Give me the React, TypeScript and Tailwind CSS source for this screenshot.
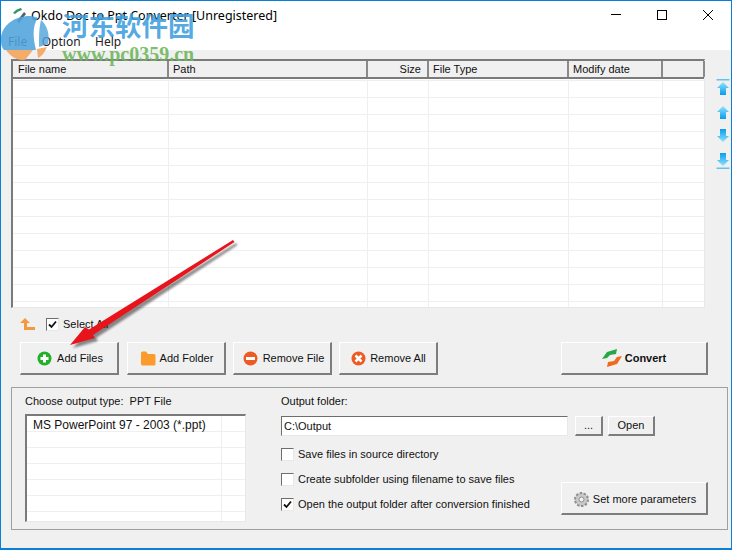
import React from 'react';

const columns = [
  { label: 'File name', width: 156, pad: 'pl-[5px]' },
  { label: 'Path', width: 199, pad: 'pl-[4px]' },
  { label: 'Size', width: 61, pad: 'pr-[6px] justify-end' },
  { label: 'File Type', width: 140, pad: 'pl-[4px]' },
  { label: 'Modify date', width: 94, pad: 'pl-[4px]' },
  { label: '', width: 42, pad: '' },
];

function ArrowIcon({ dir, bar }: { dir: 'up' | 'down'; bar?: boolean }) {
  return (
    <svg width="14" height="18" viewBox="0 0 14 18" className={dir === 'down' ? 'rotate-180' : ''}>
      <defs>
        <linearGradient id="arr-up" x1="0" y1="0" x2="0" y2="1">
          <stop offset="0" stopColor="#8fe4fa" />
          <stop offset="1" stopColor="#0b9bf0" />
        </linearGradient>
      </defs>
      {bar && <rect x="0.5" y="0" width="13" height="1.5" fill="#62c4ee" />}
      <path d="M7 3 L13 9 H10 V16 H4 V9 H1 Z" fill="url(#arr-up)" />
    </svg>
  );
}

function WinButton({ className, children }: { className: string; children: React.ReactNode }) {
  return (
    <div
      className={`flex items-center justify-center bg-[#f0f0f0] border border-t-white border-l-white border-r-2 border-b-2 border-r-[#7d7d7d] border-b-[#7d7d7d] ${className}`}
    >
      {children}
    </div>
  );
}

function Check({ checked, label }: { checked?: boolean; label: string }) {
  return (
    <div className="flex items-center gap-[4px] h-[13px]">
      <div className="w-[13px] h-[13px] bg-white border border-t-[#6d6d6d] border-l-[#6d6d6d] border-r-[#e8e8e8] border-b-[#e8e8e8] flex items-center justify-center">
        {checked && (
          <svg width="9" height="9" viewBox="0 0 9 9">
            <path d="M1 4.5 L3.5 7 L8 1.5" fill="none" stroke="#111" strokeWidth="1.8" />
          </svg>
        )}
      </div>
      <span>{label}</span>
    </div>
  );
}

function Grid({ cols, rows, rowH }: { cols: number[]; rows: number; rowH: number }) {
  return (
    <div className="relative flex-1 overflow-hidden mt-px border-t border-[#efefef]">
      {Array.from({ length: rows }).map((_, i) => (
        <div key={i} className="flex border-b border-[#efefef]" style={{ height: rowH }}>
          {cols.map((w, j) => (
            <div key={j} className="border-r border-[#efefef] shrink-0" style={{ width: w }} />
          ))}
        </div>
      ))}
    </div>
  );
}

function App() {
  return (
    <div className="relative w-[732px] h-[550px] overflow-hidden bg-white border-x border-t border-b-2 border-[#0a7fd8] font-['Liberation_Sans',sans-serif] text-[11px] text-[#111]">
      {/* title bar */}
      <div className="flex items-center h-[25px] bg-white">
        <svg width="16" height="16" viewBox="0 0 16 16" className="ml-[9px] mt-[4px]">
          <path d="M7 13 L14 4 L16 6 L9 15 Z" fill="#55606a" />
          <path d="M3 5 Q6 1 11 0 L12 2 Q8 3 5 6 Z" fill="#2a9a60" />
        </svg>
        <span className="ml-[5px] mt-[6px] font-['Noto_Sans',sans-serif] text-[12.5px] text-black">
          Okdo Doc to Ppt Converter [Unregistered]
        </span>
        <div className="ml-auto flex items-center mt-[2px]">
          <div className="w-[46px] flex justify-center">
            <div className="w-[10px] h-px bg-black" />
          </div>
          <div className="w-[46px] flex justify-center">
            <div className="w-[10px] h-[10px] border border-black" />
          </div>
          <div className="w-[46px] flex justify-center">
            <svg width="10" height="10" viewBox="0 0 10 10">
              <path d="M0 0 L10 10 M10 0 L0 10" stroke="#000" strokeWidth="1" />
            </svg>
          </div>
        </div>
      </div>

      {/* menu */}
      <div className="flex h-[24px] items-center pl-[7px] pt-[7px] gap-[14.5px] bg-white font-['Noto_Sans',sans-serif] text-[12px] text-[#222]">
        <span>File</span>
        <span>Option</span>
        <span>Help</span>
      </div>

      <div className="bg-[#f0f0f0] h-[498px] pt-[9px] pl-[10px]">
        <div className="flex">
          {/* file table */}
          <div className="w-[694px] h-[249px] flex flex-col bg-white border border-t-[#7a7a7a] border-l-[#7a7a7a] border-r-[#e8e8e8] border-b-[#e8e8e8] border-t-2 border-l-2">
            <div className="flex h-[18px] bg-[#f0f0f0] border-b-2 border-[#7a7a7a] shrink-0">
              {columns.map((c, i) => (
                <div
                  key={i}
                  style={{ width: c.width }}
                  className={`shrink-0 flex items-center border-r-2 border-[#8a8a8a] ${c.pad} ${i === 5 ? 'border-r-0' : ''}`}
                >
                  {c.label}
                </div>
              ))}
            </div>
            <Grid cols={columns.map((c) => c.width)} rows={14} rowH={17} />
          </div>

          {/* move buttons */}
          <div className="flex flex-col items-center ml-[11px] mt-[20px] gap-[6px]">
            <ArrowIcon dir="up" bar />
            <ArrowIcon dir="up" />
            <ArrowIcon dir="down" />
            <ArrowIcon dir="down" bar />
          </div>
        </div>

        {/* select all */}
        <div className="flex items-center h-[16px] mt-[8px] ml-[8px]">
          <svg width="17" height="14" viewBox="0 0 17 14">
            <path d="M1 6 L6 1 L11 6 H8 V10 H16 V13 H5 V6 Z" fill="#f59a3c" />
          </svg>
          <div className="ml-[10px]">
            <Check checked label="Select All" />
          </div>
        </div>

        {/* action buttons */}
        <div className="flex mt-[10px] ml-[9px]">
          <WinButton className="w-[99px] h-[33px] gap-[5px] pl-[2px]">
            <svg width="15" height="15" viewBox="0 0 15 15">
              <circle cx="7.5" cy="7.5" r="7" fill="#22b02a" />
              <path d="M6 3.5 H9 V6 H11.5 V9 H9 V11.5 H6 V9 H3.5 V6 H6 Z" fill="#fff" />
            </svg>
            Add Files
          </WinButton>
          <WinButton className="w-[99px] h-[33px] ml-[8px] gap-[4px] pl-[1px]">
            <svg width="16" height="15" viewBox="0 0 16 15">
              <path d="M1 2 Q1 0.5 2.5 0.5 H6 L8 3 H14 Q15.5 3 15.5 4.5 V13 Q15.5 14.5 14 14.5 H2.5 Q1 14.5 1 13 Z" fill="#fb9b2e" />
            </svg>
            Add Folder
          </WinButton>
          <WinButton className="w-[99px] h-[33px] ml-[7px] gap-[5px] pl-[3px]">
            <svg width="15" height="15" viewBox="0 0 15 15">
              <circle cx="7.5" cy="7.5" r="7" fill="#ee5a24" />
              <rect x="3" y="6" width="9" height="3" fill="#fff" />
            </svg>
            Remove File
          </WinButton>
          <WinButton className="w-[99px] h-[33px] ml-[7px] gap-[4px] pl-[1px]">
            <svg width="15" height="15" viewBox="0 0 15 15">
              <circle cx="7.5" cy="7.5" r="7" fill="#ee5a24" />
              <path d="M4.5 4.5 L10.5 10.5 M10.5 4.5 L4.5 10.5" stroke="#fff" strokeWidth="2.5" />
            </svg>
            Remove All
          </WinButton>
          <WinButton className="w-[147px] h-[33px] ml-[123px] gap-[3px] font-bold">
            <svg width="20" height="18" viewBox="0 0 20 18">
              <path d="M15 0 L5 3 L0 10 L5 9 L8 6 L14 5 Z" fill="#28a745" />
              <path d="M5 18 L15 15 L20 7 L15 8 L12 12 L6 13 Z" fill="#ef6a1d" />
            </svg>
            Convert
          </WinButton>
        </div>

        {/* output group */}
        <div className="relative flex w-[717px] h-[143px] mt-[12px] border border-[#a0a0a0] pl-[13px] pt-[7px]">
          <div className="w-[221px] shrink-0">
            <div className="h-[13px] leading-[13px]">Choose output type:&nbsp; PPT File</div>
            <div className="mt-[6px] h-[108px] flex flex-col bg-white border border-t-2 border-l-2 border-t-[#7a7a7a] border-l-[#7a7a7a] border-r-[#e8e8e8] border-b-[#e8e8e8] overflow-hidden">
              <div className="relative flex-1 overflow-hidden">
                {Array.from({ length: 7 }).map((_, i) => (
                  <div key={i} className="flex h-[16px] border-b border-[#efefef]">
                    <div className="w-[195px] shrink-0 border-r border-[#efefef] pl-[6px] leading-[19px] text-[12px]">
                      {i === 0 ? 'MS PowerPoint 97 - 2003 (*.ppt)' : ''}
                    </div>
                  </div>
                ))}
              </div>
            </div>
          </div>

          <div className="ml-[35px] flex-1">
            <div className="h-[13px] leading-[13px]">Output folder:</div>
            <div className="flex mt-[6px] items-center h-[24px]">
              <div className="w-[287px] h-[20px] bg-white border border-t-[#6d6d6d] border-l-[#6d6d6d] border-r-[#e8e8e8] border-b-[#e8e8e8] pl-[2px] leading-[18px]">
                C:\Output
              </div>
              <WinButton className="w-[28px] h-[20px] ml-[7px]">...</WinButton>
              <WinButton className="w-[47px] h-[20px] ml-[5px]">Open</WinButton>
            </div>
            <div className="mt-[10px] flex flex-col gap-[12px]">
              <Check label="Save files in source directory" />
              <Check label="Create subfolder using filename to save files" />
              <Check checked label="Open the output folder after conversion finished" />
            </div>
          </div>

          <WinButton className="absolute left-[549px] top-[94px] w-[147px] h-[33px] gap-[3px] pl-[1px] pt-[2px]">
            <svg width="17" height="17" viewBox="0 0 17 17">
              <circle cx="8.5" cy="8.5" r="6.5" fill="#c9c9c9" stroke="#8f8f8f" strokeDasharray="2.5 1.5" strokeWidth="2" />
              <circle cx="8.5" cy="8.5" r="2.5" fill="#f0f0f0" stroke="#8f8f8f" />
            </svg>
            Set more parameters
          </WinButton>
        </div>
      </div>

      {/* watermark */}
      <svg width="52" height="50" viewBox="0 0 52 50" className="absolute left-[-1px] top-[13px] pointer-events-none">
        <path d="M30 2 C 12 2 0 14 1 27 C 1 31 2 34 4 36 H36 C 33 24 32 12 38 4 C 36 3 33 2 30 2 Z" fill="#4fa3dc" opacity="0.88" />
        <path d="M41 6 C 47 11 50 20 48 30 L39 33 C 39 22 39 14 41 6 Z" fill="#4fa3dc" opacity="0.8" />
        <path d="M6 36 H33 L25 46 C 18 47 11 43 6 36 Z" fill="#f3a45a" opacity="0.9" />
        <path d="M37 35 L47 33 C 45 38 42 42 38 44 Z" fill="#f3a45a" opacity="0.9" />
      </svg>
      <div className="absolute left-[61px] top-[7px] text-[26.5px] leading-[34px] font-bold text-[#3d9ede]/90 font-['Noto_Sans_CJK_SC',sans-serif] pointer-events-none">
        河东软件园
      </div>
      <div className="absolute left-[61px] top-[42px] text-[20px] leading-[22px] font-bold text-[#6cb65a]/90 font-['Liberation_Serif',serif] pointer-events-none">
        www.pc0359.cn
      </div>

      {/* red arrow annotation */}
      <svg width="732" height="550" viewBox="0 0 732 550" className="absolute left-[-1px] top-[-1px] pointer-events-none">
        <defs>
          <filter id="arrow-blur">
            <feGaussianBlur stdDeviation="1.2" />
          </filter>
        </defs>
        <path
          d="M70 345 L85 327 L89 329.5 L233 240 L234.5 242 L93 335 L95 338 Z"
          transform="translate(3 3)"
          fill="#000"
          opacity="0.45"
          filter="url(#arrow-blur)"
        />
        <path d="M70 345 L85 327 L89 329.5 L233 240 L234.5 242 L93 335 L95 338 Z" fill="#e8141c" />
      </svg>
    </div>
  );
}

export default App;
